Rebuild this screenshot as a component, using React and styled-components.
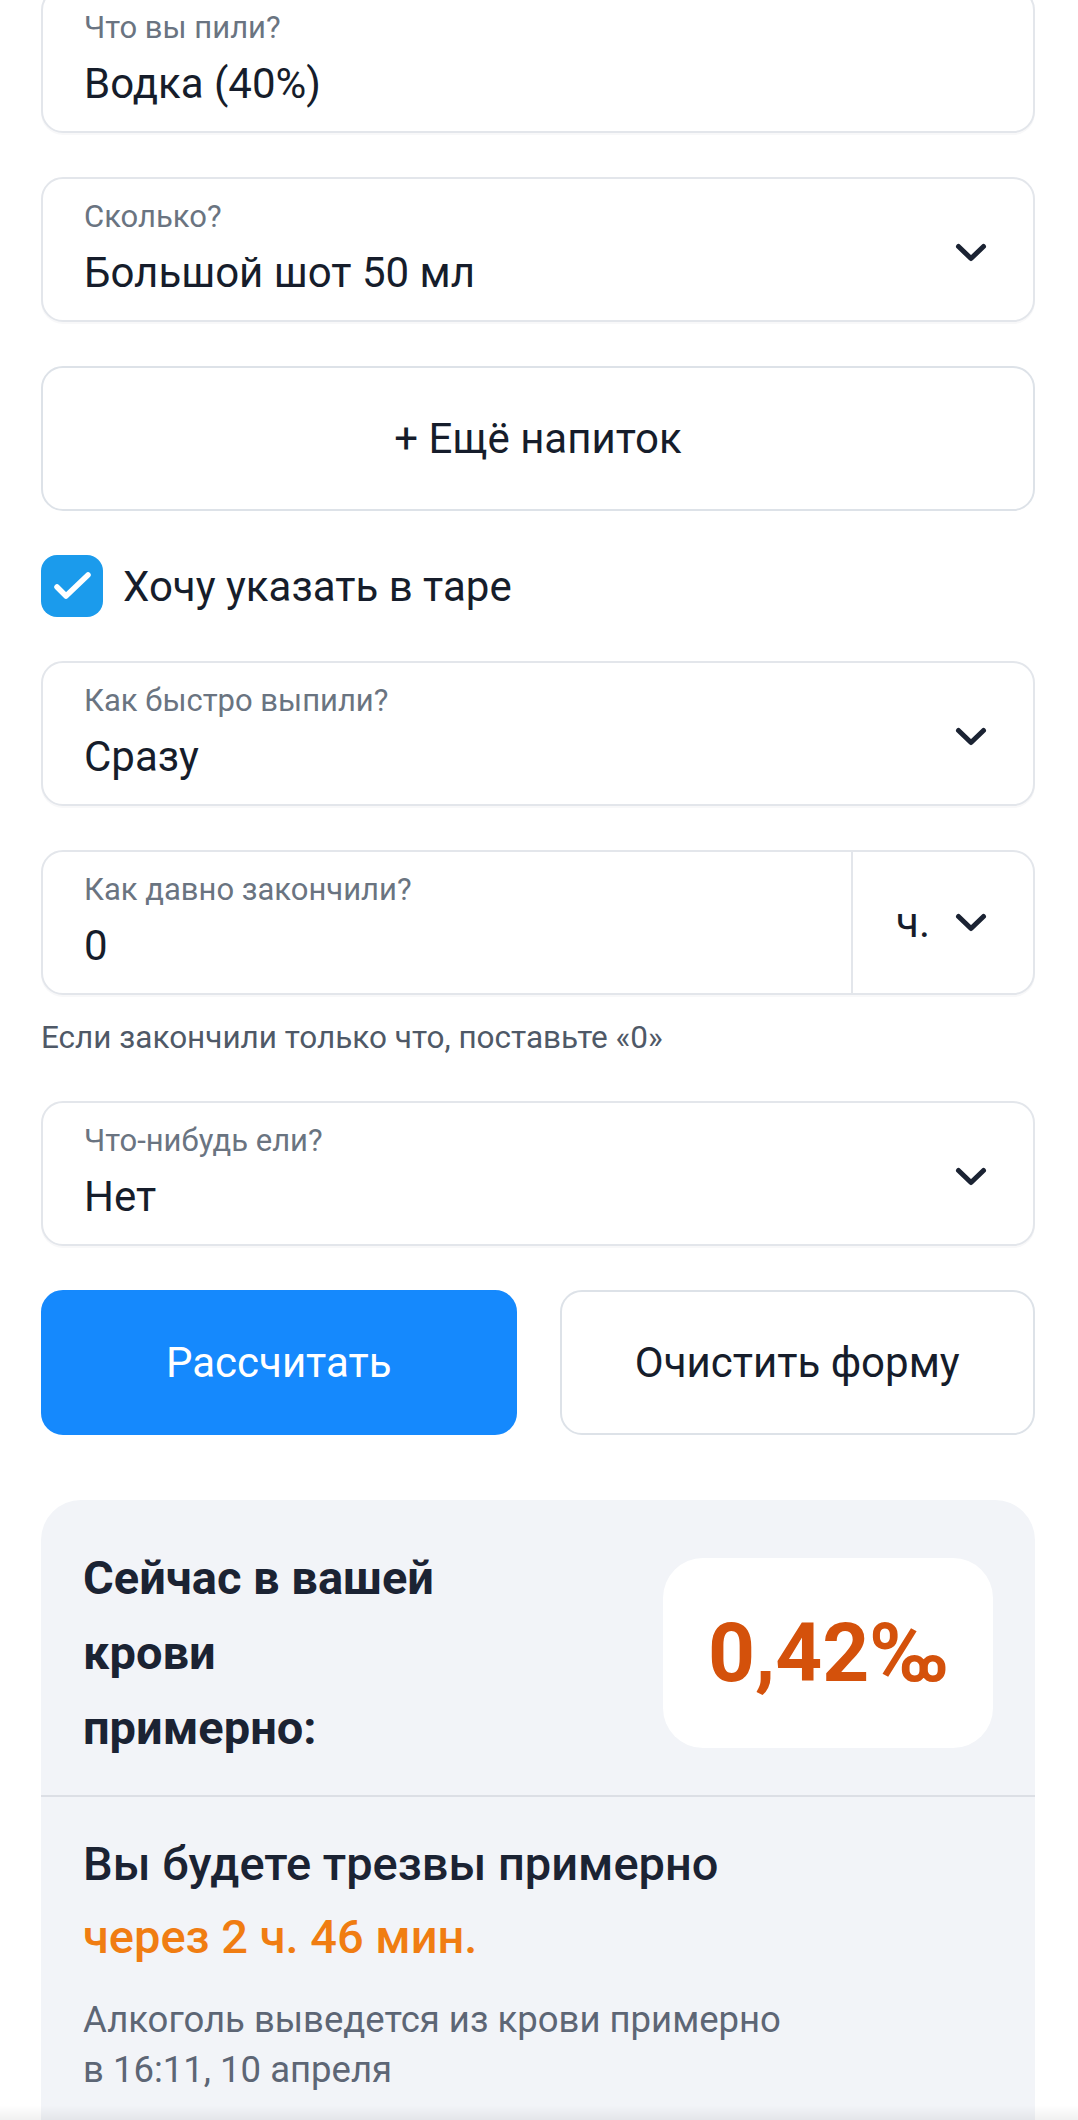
import React from 'react';
import styled, { createGlobalStyle } from 'styled-components';

const GlobalStyle = createGlobalStyle`
  html, body {
    margin: 0;
    padding: 0;
    background: #ffffff;
    font-family: Roboto, "Noto Sans", Arial, sans-serif;
    color: #1b2333;
    overflow: hidden;
  }
  * { box-sizing: border-box; }
`;

const Page = styled.div`
  width: 1078px;
  margin-top: -12px;
  padding: 0 43px 0 41px;
  display: flex;
  flex-direction: column;
  gap: 44px;
`;

const Field = styled.div`
  display: flex;
  align-items: center;
  height: 145px;
  border: 2px solid #e3e6eb;
  border-radius: 22px;
  background: #ffffff;
  box-shadow: 0 2px 0 rgba(20, 30, 50, 0.03);
  overflow: hidden;
`;

const FieldBody = styled.div`
  flex: 1;
  padding: 20px 41px 21px;
  display: flex;
  flex-direction: column;
  gap: 12px;
`;

const Label = styled.div`
  font-size: 31px;
  line-height: 36px;
  color: #6a7481;
`;

const Value = styled.div`
  font-size: 42px;
  line-height: 52px;
  color: #161d2b;
`;

const ChevronBox = styled.div`
  display: flex;
  align-items: center;
  padding-right: 46px;
  padding-top: ${p => (p.$low ? '6px' : '0')};
`;

const UnitPart = styled.div`
  align-self: stretch;
  display: flex;
  align-items: center;
  gap: 25px;
  padding: 0 46px 0 43px;
  border-left: 2px solid #e3e6eb;
  font-size: 42px;
  color: #161d2b;
`;

const Chevron = () => (
  <svg width="32" height="20" viewBox="0 0 32 20" fill="none">
    <path d="M3.5 3.5 L16 15.5 L28.5 3.5" stroke="#1b2333" strokeWidth="5" strokeLinecap="round" strokeLinejoin="round" />
  </svg>
);

const OutlineButton = styled.div`
  height: 145px;
  border: 2px solid #dde2e8;
  border-radius: 22px;
  background: #ffffff;
  display: flex;
  align-items: center;
  justify-content: center;
  font-size: 42px;
  color: #161d2b;
`;

const CheckRow = styled.label`
  display: flex;
  align-items: center;
  gap: 20px;
  height: 62px;
  font-size: 42px;
  color: #161d2b;
`;

const CheckBox = styled.span`
  width: 62px;
  height: 62px;
  border-radius: 16px;
  background: #1b9bec;
  display: flex;
  align-items: center;
  justify-content: center;
`;

const Group = styled.div`
  display: flex;
  flex-direction: column;
  gap: 24px;
`;

const Hint = styled.div`
  font-size: 31.5px;
  line-height: 38px;
  color: #4f5967;
`;

const Actions = styled.div`
  display: grid;
  grid-template-columns: 1fr 1fr;
  gap: 43px;
`;

const ActionButton = styled.div`
  height: 145px;
  border-radius: 22px;
  display: flex;
  align-items: center;
  justify-content: center;
  font-size: 42px;
  background: ${p => (p.$primary ? '#1589fd' : '#ffffff')};
  color: ${p => (p.$primary ? '#ffffff' : '#161d2b')};
  border: 2px solid ${p => (p.$primary ? '#1589fd' : '#dde2e8')};
`;

const Result = styled.div`
  margin-top: 21px;
  background: #f2f4f8;
  border-radius: 40px 40px 0 0;
  padding-bottom: 80px;
`;

const ResultTop = styled.div`
  display: flex;
  align-items: center;
  justify-content: space-between;
  padding: 40px 42px 30px;
  border-bottom: 2px solid #dcdfe5;
`;

const Heading = styled.div`
  width: 368px;
  font-size: 47px;
  line-height: 75px;
  font-weight: 700;
  color: #1b2333;
`;

const Promille = styled.div`
  width: 330px;
  height: 190px;
  border-radius: 40px;
  background: #ffffff;
  display: flex;
  align-items: center;
  justify-content: center;
  font-size: 82px;
  font-weight: 700;
  color: #d4510b;
`;

const ResultBottom = styled.div`
  padding: 30px 42px 0;
`;

const SoberTitle = styled.div`
  font-size: 47px;
  line-height: 73px;
  font-weight: 500;
  color: ${p => (p.$accent ? '#f07d12' : '#1b2333')};
`;

const Note = styled.div`
  margin-top: 22px;
  font-size: 36.5px;
  line-height: 50px;
  color: #5d6675;
`;

const BottomFade = styled.div`
  position: fixed;
  left: 0;
  right: 0;
  bottom: 0;
  height: 14px;
  background: linear-gradient(to bottom, rgba(0, 0, 0, 0), rgba(0, 0, 0, 0.06));
  pointer-events: none;
`;

const SelectField = ({ label, value }) => (
  <Field>
    <FieldBody>
      <Label>{label}</Label>
      <Value>{value}</Value>
    </FieldBody>
    <ChevronBox $low>
      <Chevron />
    </ChevronBox>
  </Field>
);

const App = () => (
  <>
    <GlobalStyle />
    <Page>
      <Field>
        <FieldBody>
          <Label>Что вы пили?</Label>
          <Value>Водка (40%)</Value>
        </FieldBody>
      </Field>

      <SelectField label="Сколько?" value="Большой шот 50 мл" />

      <OutlineButton>+ Ещё напиток</OutlineButton>

      <CheckRow>
        <CheckBox>
          <svg width="62" height="62" viewBox="0 0 62 62" fill="none">
            <path d="M16 32 L25 41 L47 20" stroke="#ffffff" strokeWidth="5.5" strokeLinecap="round" strokeLinejoin="round" />
          </svg>
        </CheckBox>
        Хочу указать в таре
      </CheckRow>

      <SelectField label="Как быстро выпили?" value="Сразу" />

      <Group>
        <Field>
          <FieldBody>
            <Label>Как давно закончили?</Label>
            <Value>0</Value>
          </FieldBody>
          <UnitPart>
            <span>ч.</span>
            <Chevron />
          </UnitPart>
        </Field>
        <Hint>Если закончили только что, поставьте «0»</Hint>
      </Group>

      <SelectField label="Что-нибудь ели?" value="Нет" />

      <Actions>
        <ActionButton $primary>Рассчитать</ActionButton>
        <ActionButton>Очистить форму</ActionButton>
      </Actions>

      <Result>
        <ResultTop>
          <Heading>Сейчас в вашей крови примерно:</Heading>
          <Promille>0,42‰</Promille>
        </ResultTop>
        <ResultBottom>
          <SoberTitle>Вы будете трезвы примерно</SoberTitle>
          <SoberTitle $accent>через 2 ч. 46 мин.</SoberTitle>
          <Note>
            Алкоголь выведется из крови примерно
            <br />
            в 16:11, 10 апреля
          </Note>
        </ResultBottom>
      </Result>
    </Page>
    <BottomFade />
  </>
);

export default App;
